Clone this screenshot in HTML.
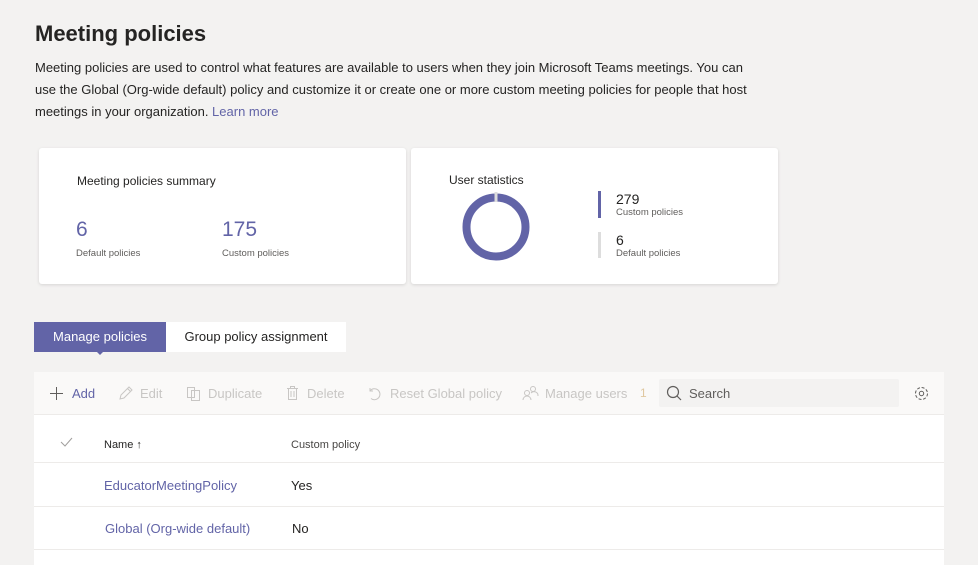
<!DOCTYPE html>
<html><head><style>
*{margin:0;padding:0;box-sizing:border-box}
body{width:978px;height:565px;background:#f3f2f1;font-family:"Liberation Sans",sans-serif;color:#252423;position:relative;overflow:hidden}
.a{position:absolute;white-space:nowrap}
.card{position:absolute;background:#fff;border-radius:3px;box-shadow:0 1px 3px rgba(0,0,0,.12)}
.p{color:#6264a7}
.g{color:#c8c6c4;font-size:13px}
svg.i{position:absolute;fill:none;stroke:#c8c6c4;stroke-width:1}
</style></head><body>
<div class="a" style="left:35px;top:21px;font-size:22px;font-weight:bold">Meeting policies</div>
<div class="a" style="left:35px;top:57px;font-size:13px;line-height:22px;white-space:normal;width:725px;color:#252423">Meeting policies are used to control what features are available to users when they join Microsoft Teams meetings. You can use the Global (Org-wide default) policy and customize it or create one or more custom meeting policies for people that host meetings in your organization. <span class="p">Learn more</span></div>

<div class="card" style="left:39px;top:148px;width:367px;height:136px">
<div class="a" style="left:38px;top:26px;font-size:12px">Meeting policies summary</div>
<div class="a" style="left:37px;top:70px;font-size:21px;color:#6264a7;font-weight:300">6</div>
<div class="a" style="left:37px;top:100px;font-size:9.5px;color:#605e5c">Default policies</div>
<div class="a" style="left:183px;top:70px;font-size:21px;color:#6264a7">175</div>
<div class="a" style="left:183px;top:100px;font-size:9.5px;color:#605e5c">Custom policies</div>
</div>
<div class="card" style="left:411px;top:148px;width:367px;height:136px">
<div class="a" style="left:38px;top:25px;font-size:12px">User statistics</div>
<svg class="a" style="left:50px;top:44px" width="70" height="70"><circle cx="35" cy="35" r="29.5" fill="none" stroke="#6264a7" stroke-width="8"/><rect x="33.5" y="0" width="3" height="10" fill="#ddd"/></svg>
<div class="a" style="left:187px;top:43px;width:3px;height:27px;background:#6264a7"></div>
<div class="a" style="left:205px;top:43px;font-size:14px">279</div>
<div class="a" style="left:205px;top:59px;font-size:9.5px;color:#605e5c">Custom policies</div>
<div class="a" style="left:187px;top:84px;width:3px;height:26px;background:#ddd"></div>
<div class="a" style="left:205px;top:84px;font-size:14px">6</div>
<div class="a" style="left:205px;top:100px;font-size:9.5px;color:#605e5c">Default policies</div>
</div>

<div class="a" style="left:34px;top:322px;width:132px;height:30px;background:#6264a7;color:#fff;font-size:13px;line-height:30px;text-align:center">Manage policies</div>
<div class="a" style="left:95px;top:350px;width:0;height:0;border-left:5px solid transparent;border-right:5px solid transparent;border-top:5px solid #6264a7"></div>
<div class="a" style="left:166px;top:322px;width:180px;height:30px;background:#fff;font-size:13px;line-height:30px;text-align:center">Group policy assignment</div>

<div class="a" style="left:34px;top:372px;width:910px;height:193px;background:#fff"></div>
<div class="a" style="left:34px;top:372px;width:910px;height:43px;background:#faf9f8;border-bottom:1px solid #edebe9"></div>
<svg class="i" style="left:50px;top:387px;stroke:#605e5c" width="13" height="13"><path d="M6.5 0v13M0 6.5h13"/></svg>
<div class="a" style="left:72px;top:386px;font-size:13px;color:#6264a7">Add</div>
<svg class="i" style="left:118px;top:386px" width="15" height="15"><path d="M2 13l1-4 8-8 3 3-8 8z M9.5 2.5l3 3"/></svg>
<div class="a g" style="left:140px;top:386px">Edit</div>
<svg class="i" style="left:186px;top:386px" width="15" height="15"><path d="M1.5 1.5h7v10h-7z M5.5 4.5h8v10h-8z"/></svg>
<div class="a g" style="left:208px;top:386px">Duplicate</div>
<svg class="i" style="left:286px;top:385px" width="13" height="16"><path d="M1 3.5h11 M4.5 3.5v-2h4v2 M2.5 3.5v11h8v-11 M5 6v6 M8 6v6"/></svg>
<div class="a g" style="left:307px;top:386px">Delete</div>
<svg class="i" style="left:368px;top:387px" width="14" height="14"><path d="M3 11.5A5.5 5.5 0 1 0 2 4 M2 1v3h3"/></svg>
<div class="a g" style="left:390px;top:386px">Reset Global policy</div>
<svg class="i" style="left:522px;top:385px" width="17" height="16"><circle cx="5" cy="8" r="2.5"/><path d="M1 15a4 4 0 0 1 8 0"/><circle cx="11" cy="4" r="2.5"/><path d="M9 8a4 4 0 0 1 7 3"/></svg>
<div class="a g" style="left:545px;top:386px">Manage users</div>
<div class="a" style="left:640px;top:386px;font-size:12px;color:#e0c8a0">1</div>
<div class="a" style="left:659px;top:379px;width:240px;height:28px;background:#f3f2f1;border-radius:2px"></div>
<svg class="a" style="left:666px;top:385px" width="16" height="16"><circle cx="7" cy="7" r="5.5" fill="none" stroke="#605e5c" stroke-width="1.2"/><path d="M11 11l4 4" stroke="#605e5c" stroke-width="1.2"/></svg>
<div class="a" style="left:689px;top:386px;font-size:13px;color:#605e5c">Search</div>
<svg class="a" style="left:913px;top:385px" width="17" height="17" viewBox="0 0 17 17"><circle cx="8.5" cy="8.5" r="2.2" fill="none" stroke="#605e5c"/><circle cx="8.5" cy="8.5" r="6" fill="none" stroke="#605e5c" stroke-dasharray="3 1.7"/></svg>

<svg class="i" style="left:60px;top:437px;stroke:#a19f9d" width="13" height="10"><path d="M1 5l4 4 7-8"/></svg>
<div class="a" style="left:104px;top:439px;font-size:11px">Name ↑</div>
<div class="a" style="left:291px;top:439px;font-size:11px;color:#484644">Custom policy</div>
<div class="a" style="left:34px;top:462px;width:910px;height:1px;background:#edebe9"></div>
<div class="a" style="left:104px;top:478px;font-size:13px;color:#6264a7">EducatorMeetingPolicy</div>
<div class="a" style="left:291px;top:478px;font-size:13px">Yes</div>
<div class="a" style="left:34px;top:506px;width:910px;height:1px;background:#edebe9"></div>
<div class="a" style="left:105px;top:521px;font-size:13px;color:#6264a7">Global (Org-wide default)</div>
<div class="a" style="left:292px;top:521px;font-size:13px">No</div>
<div class="a" style="left:34px;top:549px;width:910px;height:1px;background:#edebe9"></div>
</body></html>
